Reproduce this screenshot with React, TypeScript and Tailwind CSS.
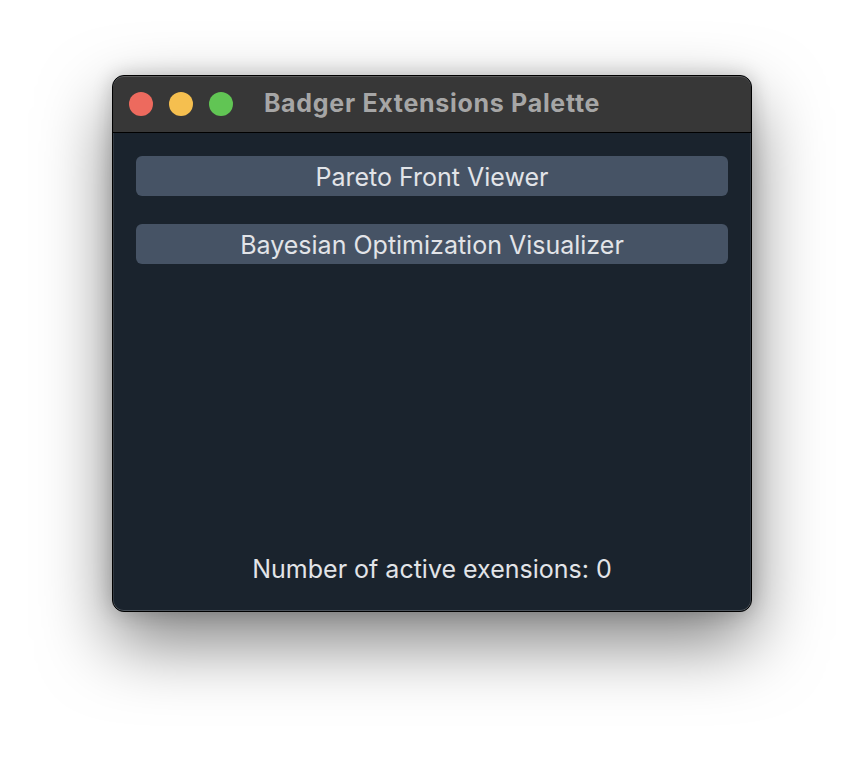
import React from 'react';

const extensions = ['Pareto Front Viewer', 'Bayesian Optimization Visualizer'];

const TrafficLights: React.FC = () => (
  <div className="flex items-center gap-[16px]">
    <span className="w-[24px] h-[24px] rounded-full bg-[#ed6a5e]" />
    <span className="w-[24px] h-[24px] rounded-full bg-[#f5bf4f]" />
    <span className="w-[24px] h-[24px] rounded-full bg-[#61c554]" />
  </div>
);

const App: React.FC = () => {
  const activeCount = 0;

  return (
    <div className="w-[864px] h-[760px] bg-white pt-[75px] pl-[112px] font-['Inter','Liberation_Sans',sans-serif]">
      <div className="w-[640px] h-[537px] rounded-[12px] border border-black bg-[#1a232d] shadow-[0_30px_70px_rgba(0,0,0,0.5),0_0_20px_rgba(0,0,0,0.2)] overflow-hidden flex flex-col">
        <div className="relative h-[57px] shrink-0 bg-[#373737] border-b border-black rounded-t-[11px] shadow-[inset_0_1px_0_rgba(255,255,255,0.18)] flex items-center px-[16px]">
          <TrafficLights />
          <div className="absolute inset-0 flex items-center justify-center pointer-events-none">
            <span className="text-[25px] font-bold text-[#a6a6a6] tracking-[0.7px]">Badger Extensions Palette</span>
          </div>
        </div>
        <div className="flex-1 flex flex-col px-[23px] pt-[23px] pb-[27px] rounded-b-[11px] shadow-[inset_0_-1px_0_rgba(255,255,255,0.22),inset_1px_0_0_rgba(255,255,255,0.1),inset_-1px_0_0_rgba(255,255,255,0.1)]">
          <div className="flex flex-col gap-[28px]">
            {extensions.map((name) => (
              <button
                key={name}
                className="h-[40px] w-full rounded-[6px] bg-[#465365] pt-[2px] text-[25px] leading-[30px] text-[#e2e4e8] flex items-center justify-center"
              >
                {name}
              </button>
            ))}
          </div>
          <div className="flex-1" />
          <p className="text-center text-[25px] text-[#e2e4e8] leading-[30px]">
            Number of active exensions: {activeCount}
          </p>
        </div>
      </div>
    </div>
  );
};

export default App;
